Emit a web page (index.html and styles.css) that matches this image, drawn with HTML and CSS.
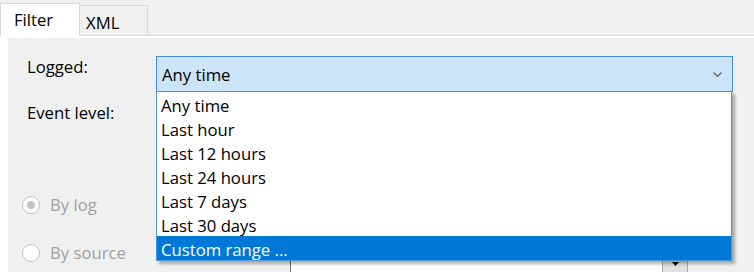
FILE: index.html
```html
<!DOCTYPE html>
<html lang="en">
  <head>
    <meta charset="UTF-8" />
    <title>Filter</title>
    <link rel="stylesheet" href="styles.css">
  </head>
  <body>
    <div class="tabs">
      <div class="tab tab-active">Filter</div>
      <div class="tab tab-xml">XML</div>
    </div>

    <div class="tab-page">
      <div class="panel">
        <div class="form-row">
          <div class="label">Logged:</div>
          <div class="combo">
            <span class="combo-value">Any time</span>
            <svg class="chevron" width="9" height="5" viewBox="0 0 9 5">
              <path d="M0.5 0.5 L4.5 4.5 L8.5 0.5" fill="none" stroke="#5f5f5f" stroke-width="1.2" />
            </svg>

            <ul class="dropdown">
              <li>Any time</li>
              <li>Last hour</li>
              <li>Last 12 hours</li>
              <li>Last 24 hours</li>
              <li>Last 7 days</li>
              <li>Last 30 days</li>
              <li class="selected">Custom range ...</li>
            </ul>
          </div>
        </div>

        <div class="form-row row-level">
          <div class="label">Event level:</div>
        </div>

        <div class="radio-row">
          <label class="radio-label"><span class="radio radio-checked"></span>By log</label>
        </div>

        <div class="radio-row radio-row-source">
          <label class="radio-label"><span class="radio"></span>By source</label>
          <div class="source-box">
            <span class="source-btn">
              <svg width="7" height="4" viewBox="0 0 7 4"><path d="M0 0 H7 L3.5 4 Z" fill="#000" /></svg>
            </span>
          </div>
        </div>
      </div>
    </div>
  </body>
</html>
```

FILE: styles.css
```css
body {
  margin: 0;
  height: 272px;
  overflow: hidden;
  background-color: #f0f0f0;
  font-family: "Open Sans", "Noto Sans", sans-serif;
  font-size: 16.7px;
  line-height: 24px;
  color: #000;
}

.tabs {
  height: 35px;
  display: flex;
  align-items: flex-end;
}

.tab {
  box-sizing: border-box;
  border: 1px solid #d9d9d9;
  border-bottom: none;
}
.tab-active {
  width: 80px;
  height: 33px;
  margin-bottom: -1px;
  padding: 4px 0 0 13px;
  background-color: #fff;
  position: relative;
  z-index: 1;
}
.tab-xml {
  width: 69px;
  height: 30px;
  margin-left: -1px;
  padding: 5px 0 0 6px;
  background-color: #f0f0f0;
}

.tab-page {
  border-top: 1px solid #d9d9d9;
  background-color: #fff;
  padding: 2px 0 0 8px;
  height: 240px;
  overflow: hidden;
}

.panel {
  background-color: #f0f0f0;
  padding: 17px 21px 0 14px;
  height: 100%;
}

.form-row {
  display: grid;
  grid-template-columns: 134px 1fr;
}

.label {
  padding-left: 5px;
}

.combo {
  position: relative;
  box-sizing: border-box;
  height: 36px;
  margin-top: 1px;
  padding: 0 10px 0 5px;
  border: 1px solid #3d8ee0;
  background-color: #cce4f7;

  display: flex;
  align-items: center;
  justify-content: space-between;
}
.combo-value {
  padding-top: 2px;
}

.dropdown {
  position: absolute;
  left: -1px;
  top: 34px;
  z-index: 2;
  box-sizing: border-box;
  width: 576px;
  margin: 0;
  padding: 0;
  list-style: none;
  border: 1px solid #4a96de;
  background-color: #fff;
  box-shadow: 3px 3px 3px rgba(0, 0, 0, 0.3);
}
.dropdown li {
  height: 24px;
  line-height: 27px;
  padding-left: 4px;
}
.dropdown li.selected {
  background-color: #0078d7;
  color: #fff;
}

.row-level {
  margin-top: 9px;
  min-height: 86px;
}

.radio-row {
  height: 36px;
  display: grid;
  grid-template-columns: 268px 1fr;
  grid-template-rows: 36px;
  align-items: center;
}
.radio-row-source {
  margin-top: 12px;
}

.radio-label {
  display: flex;
  align-items: center;
  gap: 10px;
  color: #a0a0a0;
}

.radio {
  box-sizing: border-box;
  width: 18px;
  height: 18px;
  border-radius: 50%;
  border: 1px solid #c2c2c2;
  background-color: #fff;

  display: flex;
  align-items: center;
  justify-content: center;
}
.radio-checked::after {
  content: "";
  width: 8px;
  height: 8px;
  border-radius: 50%;
  background-color: #c5c5c5;
}

.source-box {
  align-self: start;
  box-sizing: border-box;
  width: 398px;
  height: 40px;
  margin-top: 3px;
  border-left: 1px solid #6e6e6e;
  border-top: 1px solid #6e6e6e;
  background-color: #fff;

  display: flex;
  justify-content: flex-end;
}

.source-btn {
  box-sizing: border-box;
  width: 26px;
  padding-top: 22px;
  border: 1px solid #adadad;
  background-color: #e1e1e1;

  display: flex;
  justify-content: center;
  align-items: flex-start;
}
.source-btn svg {
  display: block;
}
```
